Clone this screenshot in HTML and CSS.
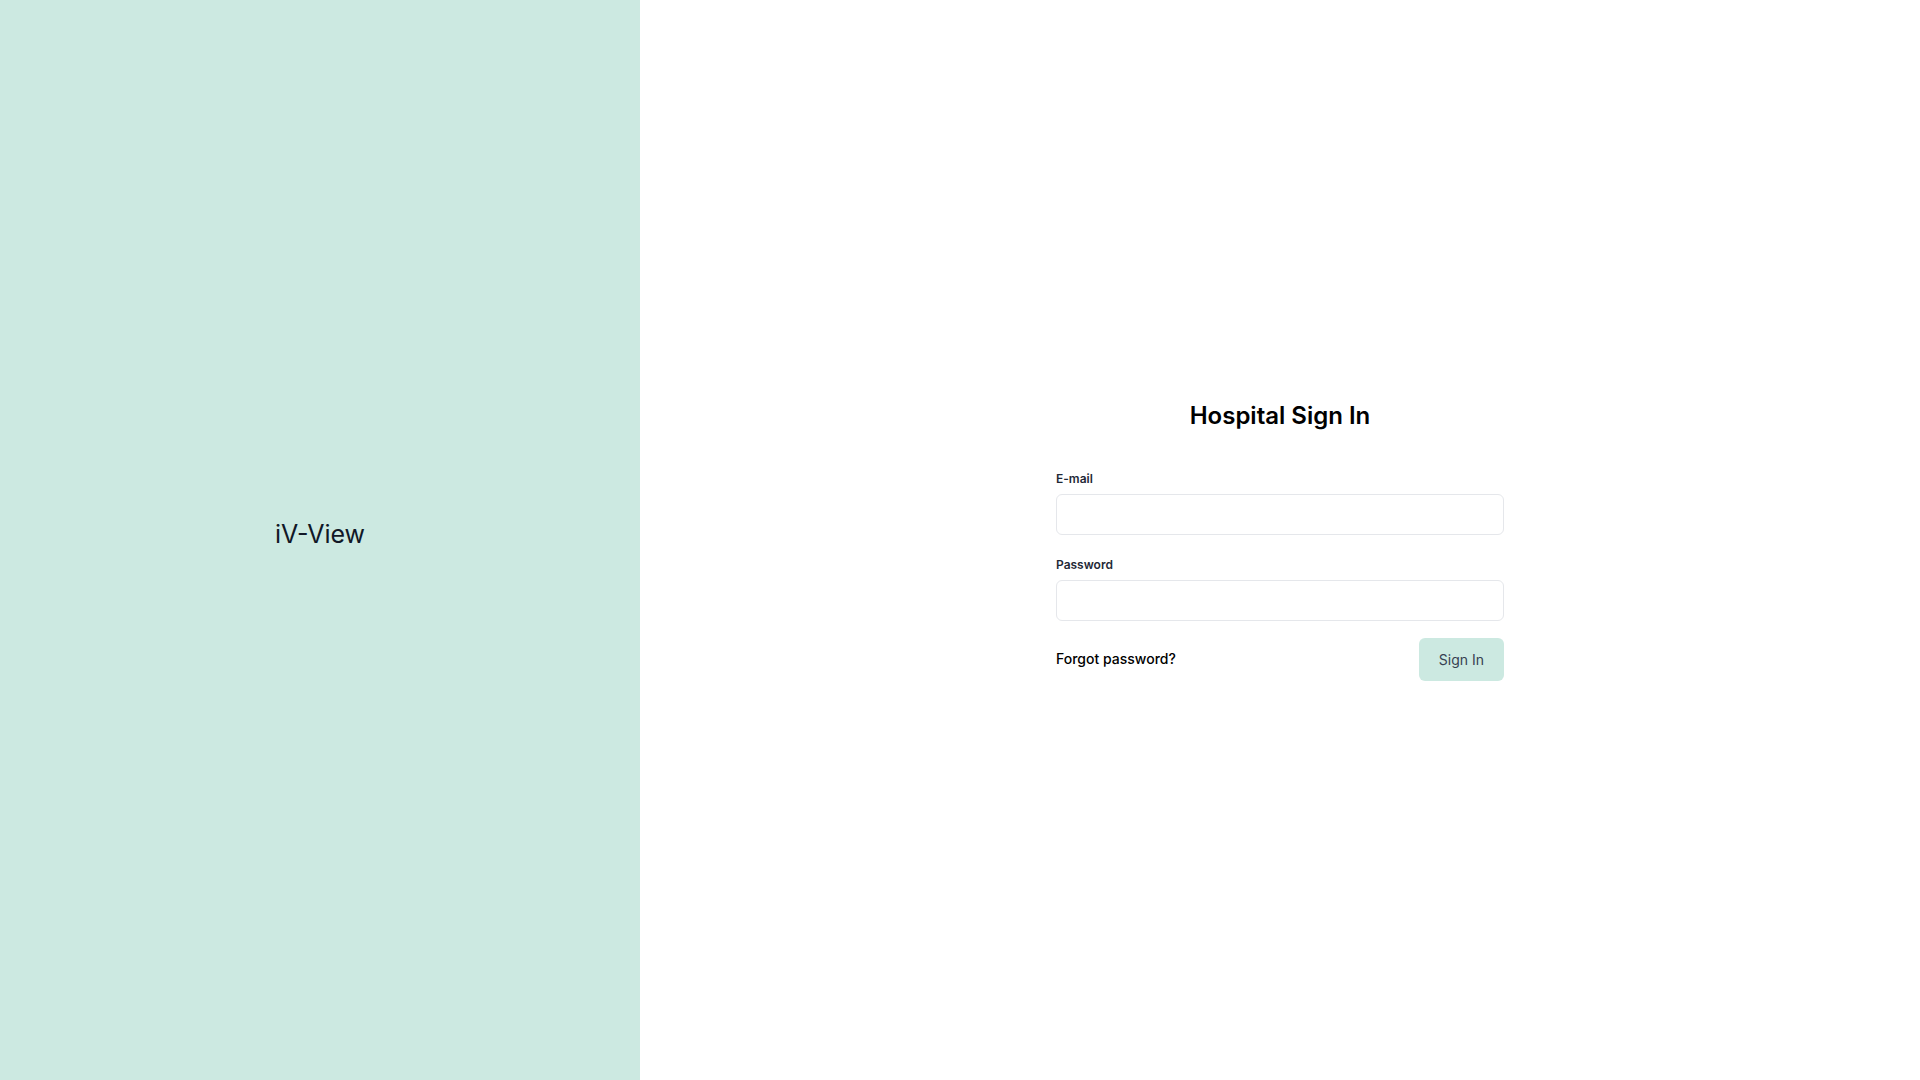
FILE: index.html
```html
<!DOCTYPE html>
<html lang="en">
<head>
<meta charset="utf-8">
<title>Hospital Sign In</title>
<link rel="stylesheet" href="styles.css">
</head>
<body>
<div class="page">
  <aside class="brand">
    <div class="brand-name">iV-View</div>
  </aside>
  <main class="main">
    <form class="signin">
      <h1 class="title">Hospital Sign In</h1>
      <div class="field">
        <label class="label" for="email">E-mail</label>
        <input class="input" id="email" type="email">
      </div>
      <div class="field field-last">
        <label class="label" for="password">Password</label>
        <input class="input" id="password" type="password">
      </div>
      <div class="actions">
        <a class="forgot" href="#">Forgot password?</a>
        <button class="btn" type="button">Sign In</button>
      </div>
    </form>
  </main>
</div>
</body>
</html>
```
FILE: styles.css
```css
* { box-sizing: border-box; }
html, body { margin: 0; padding: 0; height: 100%; }
body {
  font-family: Inter, "Liberation Sans", sans-serif;
  background: #ffffff;
  color: #111827;
}
.page {
  display: flex;
  height: 1080px;
}
.brand {
  width: 640px;
  flex: 0 0 640px;
  background: #cce9e1;
  display: flex;
  align-items: center;
  justify-content: center;
  padding-bottom: 12px;
}
.brand-name {
  font-size: 25px;
  line-height: 32px;
  color: #111827;
  font-weight: 400;
}
.main {
  flex: 1;
  display: flex;
  align-items: center;
  justify-content: center;
}
.signin {
  width: 448px;
  display: flex;
  flex-direction: column;
}
.title {
  margin: 0 0 39px;
  text-align: center;
  font-size: 24px;
  line-height: 32px;
  font-weight: 600;
  color: #000000;
}
.field {
  display: flex;
  flex-direction: column;
  gap: 7px;
  margin-bottom: 22px;
}
.field-last { margin-bottom: 17px; }
.label {
  font-size: 12px;
  line-height: 16px;
  font-weight: 600;
  color: #1f2937;
}
.input {
  height: 41px;
  border: 1px solid #e5e7eb;
  border-radius: 6px;
  background: #ffffff;
  padding: 0 12px;
  font: inherit;
  font-size: 14px;
  outline: none;
}
.actions {
  display: flex;
  align-items: center;
  justify-content: space-between;
}
.forgot {
  font-size: 14px;
  line-height: 20px;
  font-weight: 500;
  color: #000000;
  text-decoration: none;
}
.btn {
  height: 43px;
  padding: 0 20px;
  border: none;
  border-radius: 6px;
  background: #cce9e1;
  color: #374151;
  font-family: inherit;
  font-size: 14px;
  font-weight: 400;
  cursor: pointer;
}
```
